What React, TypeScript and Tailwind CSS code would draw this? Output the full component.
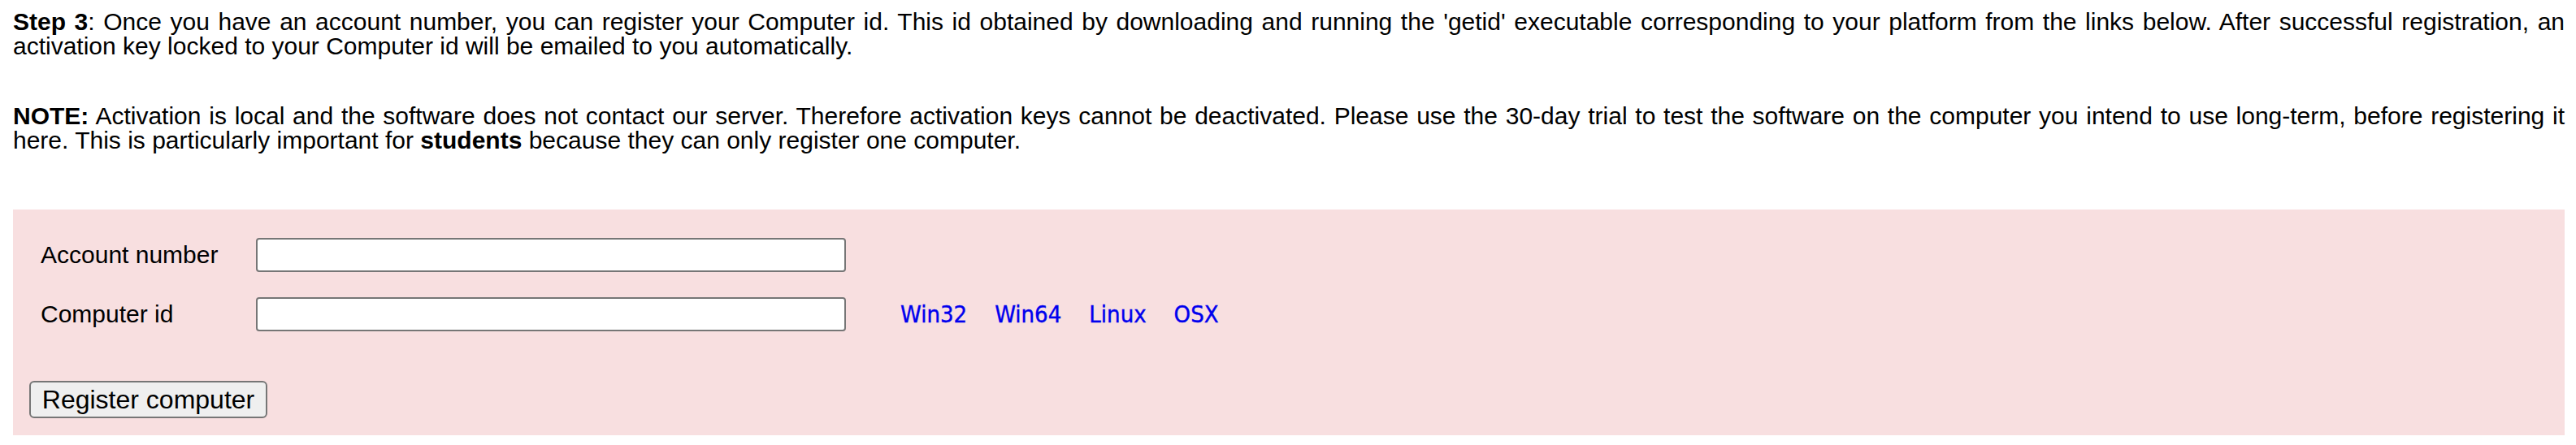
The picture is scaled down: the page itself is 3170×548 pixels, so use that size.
import React from 'react';

const links = ['Win32', 'Win64', 'Linux', 'OSX'];

export default function App() {
  return (
    <div className="min-h-screen bg-white pl-[16px] pr-[14px] pt-[12px] font-['Liberation_Sans',Arial,sans-serif] text-[30px] leading-[30px] text-black">
      {/* Step 3 text */}
      <p className="text-justify">
        <span className="block [text-align-last:justify]">
          <b>Step 3</b>: Once you have an account number, you can register your Computer id. This id obtained by downloading and running the 'getid' executable corresponding to your platform from the links below. After successful registration, an
        </span>
        <span className="block">activation key locked to your Computer id will be emailed to you automatically.</span>
      </p>

      <p className="mt-[56px] text-justify">
        <span className="block [text-align-last:justify]">
          <b>NOTE:</b> Activation is local and the software does not contact our server. Therefore activation keys cannot be deactivated. Please use the 30-day trial to test the software on the computer you intend to use long-term, before registering it
        </span>
        <span className="block">
          here. This is particularly important for <b>students</b> because they can only register one computer.
        </span>
      </p>

      {/* registration form */}
      <div className="mt-[70px] bg-[#f8dfe0] pl-[20px] pt-[35px] pb-[21px]">
        <div className="flex h-[42px] items-center pl-[14px]">
          <label className="w-[265px]">Account number</label>
          <input type="text" className="h-[42px] w-[726px] rounded-[4px] border-2 border-[#767676] bg-white" />
        </div>
        <div className="mt-[31px] flex h-[42px] items-center pl-[14px]">
          <label className="w-[265px]">Computer id</label>
          <input type="text" className="h-[42px] w-[726px] rounded-[4px] border-2 border-[#767676] bg-white" />
          <div className="ml-[67px] flex gap-[34px] font-['DejaVu_Sans_Condensed','DejaVu_Sans',sans-serif] text-[29px] leading-none">
            {links.map((l) => (
              <a key={l} href="#" className="text-[#0000ee] [-webkit-text-stroke:0.4px_#0000ee]">{l}</a>
            ))}
          </div>
        </div>
        <button className="mt-[61px] h-[46px] w-[293px] rounded-[6px] border-2 border-[#767676] bg-[#efefef] text-[32px] leading-none">
          Register computer
        </button>
      </div>
    </div>
  );
}
